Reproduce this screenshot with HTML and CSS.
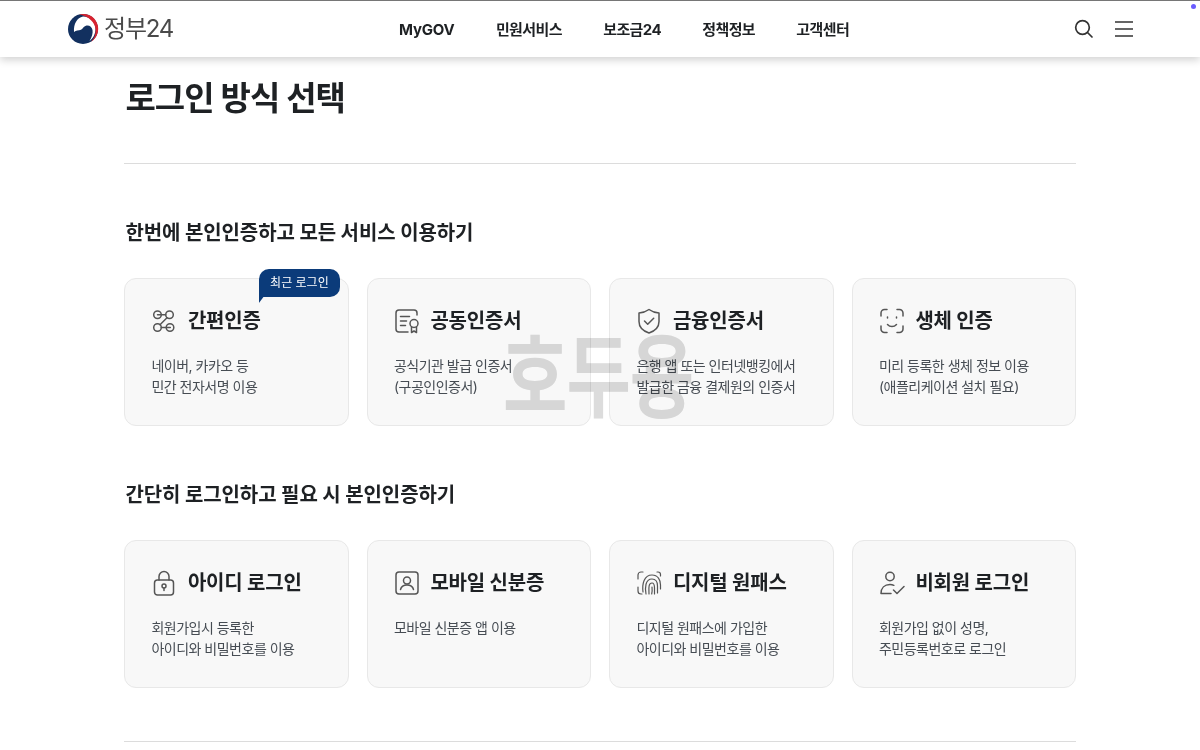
FILE: index.html
```html
<!DOCTYPE html>
<html lang="ko">
<head>
<meta charset="utf-8">
<title>로그인 방식 선택</title>
<link rel="stylesheet" href="styles.css">
</head>
<body>
<header class="header">
  <a class="logo">
    <svg class="logo-mark" width="32" height="32" viewBox="0 0 32 32">
      <circle cx="16" cy="16" r="15" fill="#12305f"/>
      <path d="M7 19C6.500 11 10 4.500 16 3.500 23 3.500 28.500 9.500 28.500 16 28.500 21 26 25.500 22.500 28 25 24 26 20 25.500 17 25 14 22.500 12 19.500 12.500 17 13 16 15.500 14 16.800 11.500 18 9 17 7 19z" fill="#fff"/>
      <path d="M12 1.500A15 15 0 0 1 24 28.700C27.500 25.500 29 21 28.500 16 28 9.500 22 3 12 1.500z" fill="#d8232f"/>
    </svg>
    <span class="logo-text">정부24</span>
  </a>
  <nav class="nav">
    <a class="nav-en">MyGOV</a><a>민원서비스</a><a>보조금24</a><a>정책정보</a><a>고객센터</a>
  </nav>
  <div class="tools">
    <svg width="20" height="20" viewBox="0 0 20 20" fill="none" stroke="#333" stroke-width="1.700" stroke-linecap="round"><circle cx="8.500" cy="8.500" r="6.800"/><path d="M13.500 13.500 18 18"/></svg>
    <svg width="18" height="16" viewBox="0 0 18 16" fill="none" stroke="#333" stroke-width="1.600"><path d="M0 1h18M0 8h18M0 15h18"/></svg>
  </div>
</header>
<span class="dot"></span>

<main class="main">
  <h1 class="title">로그인 방식 선택</h1>
  <hr class="rule">

  <h2 class="section-title">한번에 본인인증하고 모든 서비스 이용하기</h2>
  <div class="cards">
    <article class="card">
      <span class="badge">최근 로그인</span>
      <h3 class="card-title">
        <svg class="icon" width="26" height="26" viewBox="0 0 26 26"><circle cx="6.500" cy="6.800" r="3.800"/><circle cx="18.500" cy="6.800" r="3.800"/><circle cx="6.500" cy="19.500" r="3.800"/><circle cx="19" cy="19.500" r="3.800"/><path d="M6.500 6.800h8.200M16 9.800 9 16.800M10.300 19.500h9"/></svg>
        간편인증</h3>
      <p class="card-text">네이버, 카카오 등<br>민간 전자서명 이용</p>
    </article>
    <article class="card">
      <h3 class="card-title">
        <svg class="icon" width="26" height="26" viewBox="0 0 26 26"><path d="M23 7V5a3 3 0 0 0-3-3H5a3 3 0 0 0-3 3v16a3 3 0 0 0 3 3h9M6.500 8.500h9M6.500 13h6M6.500 17.500h5"/><circle cx="20" cy="15.500" r="4"/><path d="M17.500 19v5.500l2.500-1.500 2.500 1.500V19"/></svg>
        공동인증서</h3>
      <p class="card-text">공식기관 발급 인증서<br>(구공인인증서)</p>
    </article>
    <article class="card">
      <h3 class="card-title">
        <svg class="icon" width="26" height="26" viewBox="0 0 26 26"><path d="M13 1.500c3 2.200 6 3.300 10 3.500v8.500c0 5.500-4 9.500-10 11.500-6-2-10-6-10-11.500V5c4-.2 7-1.300 10-3.500z"/><path d="m8.500 13 3.200 3.200 6-6"/></svg>
        금융인증서</h3>
      <p class="card-text">은행 앱 또는 인터넷뱅킹에서<br>발급한 금융 결제원의 인증서</p>
    </article>
    <article class="card">
      <h3 class="card-title">
        <svg class="icon" width="26" height="26" viewBox="0 0 26 26"><path d="M2 8V5a3.500 3.500 0 0 1 3.500-3.500H8M18 1.500h2.500A3.500 3.500 0 0 1 24 5v3M2 18v3a3.500 3.500 0 0 0 3.500 3.500H8M24 18v3a3.500 3.500 0 0 1-3.500 3.500H18M8.500 16.500c2.500 2.800 6.500 2.800 9 0"/><path d="M8.500 9v1M17.500 9v1"/></svg>
        생체 인증</h3>
      <p class="card-text">미리 등록한 생체 정보 이용<br>(애플리케이션 설치 필요)</p>
    </article>
  </div>

  <h2 class="section-title">간단히 로그인하고 필요 시 본인인증하기</h2>
  <div class="cards">
    <article class="card">
      <h3 class="card-title">
        <svg class="icon" width="26" height="26" viewBox="0 0 26 26"><rect x="3.500" y="10" width="19" height="15" rx="3"/><path d="M8 10V6.500a5 5 0 0 1 10 0V10"/><circle cx="13" cy="16" r="2"/><path d="M13 18v2.500"/></svg>
        아이디 로그인</h3>
      <p class="card-text">회원가입시 등록한<br>아이디와 비밀번호를 이용</p>
    </article>
    <article class="card">
      <h3 class="card-title">
        <svg class="icon" width="26" height="26" viewBox="0 0 26 26"><rect x="2" y="2" width="22" height="22" rx="3"/><circle cx="13" cy="10.500" r="3.500"/><path d="M6.500 19.500c.8-3 3.300-4.500 6.500-4.500s5.700 1.500 6.500 4.500"/></svg>
        모바일 신분증</h3>
      <p class="card-text">모바일 신분증 앱 이용</p>
    </article>
    <article class="card">
      <h3 class="card-title">
        <svg class="icon fine" width="26" height="26" viewBox="0 0 26 26"><path d="M2 9V5a3 3 0 0 1 3-3h2M2 17v4a3 3 0 0 0 3 3h1M21 2h1a2.500 2.500 0 0 1 2.500 2.500V6M7 22c-1-8 1-17 9-17 6 0 8.500 5 8.500 10v4M10 24c-1-6-1-15 6-15 4 0 5.500 3 5.500 7v7M13 24c0-5-1-11 3-11 2.500 0 2.500 3 2.500 5v6M16 17c.3 3 .3 5-.3 7"/></svg>
        디지털 원패스</h3>
      <p class="card-text">디지털 원패스에 가입한<br>아이디와 비밀번호를 이용</p>
    </article>
    <article class="card">
      <h3 class="card-title">
        <svg class="icon" width="26" height="26" viewBox="0 0 26 26"><circle cx="11" cy="6.500" r="4.200"/><path d="M2 23.500c0-5.500 3.500-9 9-9 1.500 0 2.800.3 3.800.8M2 23.500h10M14.500 20l3.500 3.500 7-7"/></svg>
        비회원 로그인</h3>
      <p class="card-text">회원가입 없이 성명,<br>주민등록번호로 로그인</p>
    </article>
  </div>
  <hr class="rule bottom">
</main>
<div class="watermark">호두용</div>
</body>
</html>
```

FILE: styles.css
```css
* { box-sizing: border-box; }
html, body { margin: 0; padding: 0; }
body {
  height: 750px;
  overflow: hidden;
  background: #fff;
  color: #1e2124;
  font-family: Inter, "Noto Sans CJK KR", sans-serif;
}
.header {
  height: 57px;
  border-top: 1px solid #767676;
  background: #fff;
  box-shadow: 0 3px 8px rgba(0, 0, 0, .18);
  padding: 0 67px 0 67px;
  display: flex;
  align-items: center;
  position: relative;
}
.logo { width: 241px; display: flex; align-items: center; gap: 5px; }
.logo-mark { display: block; }
.logo-text { font-size: 24px; letter-spacing: -1.200px; color: #4a4a4a; line-height: 32px; }
.nav { display: flex; align-items: baseline; gap: 41.300px; margin-left: 91px; padding-bottom: 2px; font-size: 15px; font-weight: 700; letter-spacing: -.6px; color: #1e2124; }
.nav-en { letter-spacing: -.2px; }
.tools { margin-left: auto; display: flex; align-items: center; gap: 21px; }
.dot { position: absolute; left: 1191px; top: 4px; width: 5px; height: 5px; border-radius: 50%; background: #6a5cff; }
.main { width: 951.200px; margin: 0 auto; }
.title { margin: 17px 0 0; padding-left: 1px; font-size: 33px; font-weight: 700; line-height: 48px; letter-spacing: -.95px; }
.rule { margin: 41px 0 0; border: 0; height: 1px; background: #dcdcdc; }
.rule.bottom { margin-top: 53px; }
.section-title { margin: 54px 0 30px; padding-left: 1px; font-size: 20px; font-weight: 700; line-height: 30px; letter-spacing: -.1px; }
.cards { display: grid; grid-template-columns: repeat(4, 224.500px); gap: 18px; }
.card {
  position: relative;
  height: 148px;
  padding: 27px 26px 0;
  background: #f8f8f8;
  border: 1px solid #e8e8e8;
  border-radius: 12px;
}
.card-title { margin: 0; display: flex; align-items: center; gap: 10.500px; font-size: 20px; font-weight: 700; line-height: 30px; letter-spacing: -.2px; color: #1e2124; }
.icon { flex: none; fill: none; stroke: #555; stroke-width: 1.500; stroke-linecap: round; stroke-linejoin: round; }
.icon.fine { stroke-width: 1.200; }
.card-text { margin: 19px 0 0; font-size: 14px; line-height: 21px; letter-spacing: -.5px; color: #464c53; }
.badge {
  position: absolute;
  right: 8px;
  top: -10px;
  height: 28px;
  width: 81px;
  padding-bottom: 1px;
  text-align: center;
  font-size: 12px;
  line-height: 27px;
  color: #fff;
  background: #0b3b7a;
  border-radius: 10px 10px 10px 0;
}
.badge::after {
  content: "";
  position: absolute;
  left: 0;
  top: 26px;
  width: 6px;
  height: 8px;
  background: #0b3b7a;
  clip-path: polygon(0 0, 100% 0, 0 100%);
}
.watermark {
  position: absolute;
  left: 503px;
  top: 322px;
  font-size: 70px;
  line-height: 110px;
  font-weight: 700;
  letter-spacing: -1px;
  color: #dcdcdc;
  mix-blend-mode: multiply;
  pointer-events: none;
  transform: scaleY(1.300);
}
```
